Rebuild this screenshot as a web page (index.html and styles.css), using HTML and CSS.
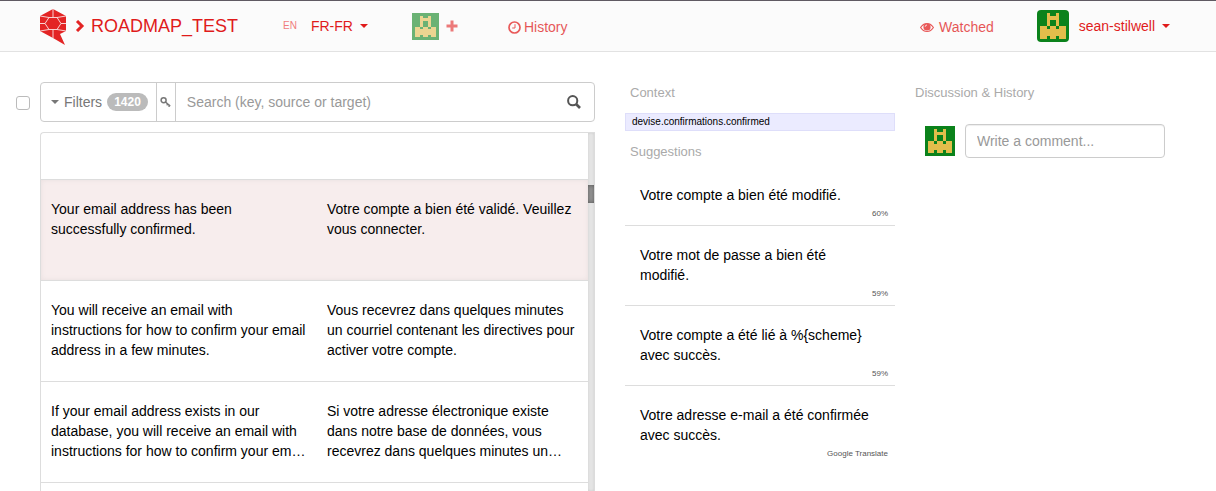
FILE: index.html
```html
<!DOCTYPE html>
<html lang="en">
<head>
<meta charset="utf-8">
<title>ROADMAP_TEST</title>
<link rel="stylesheet" href="styles.css">
</head>
<body>
<svg class="defs" aria-hidden="true">
  <symbol id="avatar" viewBox="0 0 10 10">
    <rect width="10" height="10" fill="#0b821b"/>
    <path fill="#e2bd4b" d="M3 1h1v1h2V1h1v4h2v4H7V8H6v1H4V8H3v1H1V5h2V1zM4 3v2h2V3zM3 5v1h1V5zM6 5v1h1V5z" fill-rule="evenodd" shape-rendering="crispEdges"/>
  </symbol>
</svg>
<header class="nav">
  <a class="logo" href="#" aria-label="Home">
    <svg width="26" height="36" viewBox="0 0 26 36">
      <path fill="#e32424" d="M13 0 26 7v15l-6 3 5 11-12-7L0 22V7z"/>
      <path fill="none" stroke="#fbe4e4" stroke-width=".9" d="M9 8.500h8l4 6-4 6H9l-4-6zM13 0v8.500M0 7l9 1.500M26 7l-9 1.500M0 14.500h5M21 14.500h5M9 20.500 0 22M17 20.500l9 1.500M13 20.500V29"/>
    </svg>
  </a>
  <svg class="chevron" width="10" height="12" viewBox="0 0 10 12"><path d="M2 1l5 5-5 5" fill="none" stroke="#e32424" stroke-width="3"/></svg>
  <a class="project" href="#">ROADMAP_TEST</a>
  <span class="source">EN</span>
  <button class="menu lang" type="button">FR-FR <i class="caret"></i></button>
  <a class="team" href="#" aria-label="Add member">
    <svg width="27" height="27"><use href="#avatar"/></svg>
    <svg width="12" height="12" viewBox="0 0 12 12"><path d="M6 2v8M2 6h8" stroke="#e32424" stroke-width="3" stroke-linecap="square" fill="none"/></svg>
  </a>
  <a class="link history" href="#"><svg width="13" height="13" viewBox="0 0 13 13" fill="none" stroke="#e32424"><circle cx="6.500" cy="6.500" r="5.500" stroke-width="1.700"/><path d="M7 3.200V7H4.200"/></svg>History</a>
  <a class="link watched" href="#"><svg width="14" height="11" viewBox="0 0 14 11"><path d="M.6 5.500C3.800.2 10.200.2 13.400 5.500 10.200 10.800 3.800 10.800.6 5.500z" fill="none" stroke="#e32424" stroke-width="1.200"/><circle cx="7" cy="5" r="3.600" fill="#e32424"/><path d="M5.200 4.800A1.800 1.800 0 0 1 7 3" fill="none" stroke="#fbfbfb" stroke-width=".8"/></svg>Watched</a>
  <button class="menu user" type="button"><svg class="face" width="32" height="32"><use href="#avatar"/></svg>sean-stilwell <i class="caret"></i></button>
</header>
<main class="board">
  <input class="pick" type="checkbox" aria-label="Select all">
  <section class="strings">
    <form class="search">
      <button class="filters" type="button"><i class="caret"></i>Filters<span class="badge">1420</span></button>
      <button class="key" type="button" aria-label="Key filter"><svg width="11" height="10" viewBox="0 0 11 10" fill="none" stroke="#777"><circle cx="3.600" cy="3.300" r="2.500" stroke-width="1.500"/><path d="M5.200 4.800l5 4.300M6.600 8.200l1.500-1.700M8.600 9.700l1.500-1.700" stroke-width="1.400"/></svg></button>
      <input class="query" type="text" aria-label="Search" placeholder="Search (key, source or target)">
      <button class="go" type="submit" aria-label="Search"><svg width="14" height="14" viewBox="0 0 14 14" fill="none" stroke="#555"><circle cx="5.700" cy="5.700" r="4.600" stroke-width="2"/><path d="M9 9l4 4" stroke-width="2.600"/></svg></button>
    </form>
    <div class="list">
      <div class="rows">
        <div class="row short"></div>
        <div class="row active"><p>Your email address has been successfully confirmed.</p><p>Votre compte a bien été validé. Veuillez vous connecter.</p></div>
        <div class="row"><p>You will receive an email with instructions for how to confirm your email address in a few minutes.</p><p>Vous recevrez dans quelques minutes un courriel contenant les directives pour activer votre compte.</p></div>
        <div class="row"><p>If your email address exists in our database, you will receive an email with instructions for how to confirm your em…</p><p>Si votre adresse électronique existe dans notre base de données, vous recevrez dans quelques minutes un…</p></div>
      </div>
      <div class="track"><div class="thumb"></div></div>
    </div>
  </section>
  <section class="context">
    <h2>Context</h2>
    <p class="path">devise.confirmations.confirmed</p>
    <h2>Suggestions</h2>
    <ul class="suggestions">
      <li>Votre compte a bien été modifié.<small>60%</small></li>
      <li>Votre mot de passe a bien été modifié.<small>59%</small></li>
      <li>Votre compte a été lié à %{scheme} avec succès.<small>59%</small></li>
      <li>Votre adresse e-mail a été confirmée avec succès.<small>Google Translate</small></li>
    </ul>
  </section>
  <section class="talk">
    <h2>Discussion &amp; History</h2>
    <div class="comment">
      <svg width="30" height="30" aria-hidden="true"><use href="#avatar"/></svg>
      <input type="text" aria-label="Comment" placeholder="Write a comment...">
    </div>
  </section>
</main>
</body>
</html>
```
FILE: styles.css
```css
* { box-sizing: border-box; }
html { height: 100%; }
body {
  margin: 0;
  min-height: 100%;
  display: flex;
  flex-direction: column;
  font: 14px/20px "Liberation Sans", Arial, sans-serif;
  color: #000;
  background: #fff;
}
p, h2, ul { margin: 0; padding: 0; }
button, input { font: inherit; }
button { padding: 0; border: 0; background: none; cursor: pointer; }
svg { display: block; flex: none; }
.defs { position: absolute; width: 0; height: 0; }
.caret {
  display: inline-block;
  border: 4px solid transparent;
  border-top-color: currentColor;
  border-bottom: 0;
}

.nav {
  flex: none;
  display: flex;
  align-items: center;
  height: 52px;
  padding: 0 46px 0 40px;
  background: #fbfbfb;
  border-top: 1px solid #5f5a62;
  border-bottom: 1px solid #e2e2e2;
}
.nav a, .menu { color: #e01b1b; text-decoration: none; }
.nav .logo { padding-top: 2px; }
.chevron { margin: 0 6px 0 9px; }
.project { font-size: 18px; }
.source { margin-left: 45px; font-size: 10px; color: #f07c7c; }
.menu { display: flex; align-items: center; gap: 7px; }
.lang { margin-left: 14px; }
.nav .team { display: flex; align-items: center; gap: 7px; margin-left: 44px; opacity: .6; }
.nav .link { display: flex; align-items: center; gap: 3px; padding-top: 2px; opacity: .75; }
.nav .history { margin-left: 50px; }
.nav .watched { margin-left: auto; gap: 5px; }
.user { margin-left: 43px; }
.face { border-radius: 4px; margin-right: 3px; }

.board {
  flex: 1;
  display: grid;
  grid-template-columns: 25px minmax(0, 585fr) minmax(0, 290fr) minmax(0, 301fr);
  padding: 30px 0 0 15px;
}
.pick {
  appearance: none;
  width: 14px;
  height: 14px;
  margin: 14px 0 0 1px;
  border: 1px solid #bbb;
  border-radius: 3px;
  background: #fff;
}
.strings { display: flex; flex-direction: column; padding-right: 30px; }
.context { padding-right: 20px; }
.search {
  flex: none;
  display: flex;
  height: 40px;
  border: 1px solid #ccc;
  border-radius: 4px;
}
.filters {
  display: flex;
  align-items: center;
  gap: 5px;
  padding: 0 8px 0 10px;
  color: #777;
}
.badge {
  padding: 0 7px;
  border-radius: 10px;
  background: #bbb;
  color: #fff;
  font-size: 12px;
  line-height: 18px;
  font-weight: bold;
}
.key {
  display: flex;
  align-items: center;
  justify-content: center;
  width: 20px;
  border: 1px solid #ccc;
  border-width: 0 1px;
}
.query { flex: 1; min-width: 0; border: 0; padding: 0 11px; background: none; }
input::placeholder { color: #999; opacity: 1; }
.go { padding: 0 13px; }
.list {
  flex: 1;
  display: flex;
  margin-top: 10px;
  overflow: hidden;
  border: 1px solid #ddd;
  border-width: 1px 0 0 1px;
  border-radius: 4px 0 0 0;
}
.rows { flex: 1; }
.row {
  display: grid;
  grid-template-columns: 276fr 271fr;
  min-height: 101px;
  padding: 19px 0;
  border-bottom: 1px solid #ddd;
}
.row p { padding: 0 10px; }
.row.short { min-height: 47px; }
.active { background: #f7eded; box-shadow: inset 0 0 5px #e8dfdf; }
.track {
  width: 7px;
  padding-top: 52px;
  background: #e6e6e6;
  border-right: 1px solid #dcdcdc;
  box-shadow: inset 0 0 3px #ccc;
}
.thumb { height: 18px; background: #999; box-shadow: inset 0 0 4px #555; }

h2 { padding-top: 1px; font-size: 13px; line-height: 20px; font-weight: normal; color: #aaa; }
.context h2 { padding-left: 5px; }
.path {
  margin: 10px 0;
  padding: 0 6px;
  font-size: 10px;
  line-height: 16px;
  background: #ebebff;
  border: 1px solid #dedefa;
}
.suggestions { list-style: none; margin-top: 4px; }
.suggestions li { padding: 19px 17px 4px 15px; border-bottom: 1px solid #ddd; }
.suggestions li:last-child { border: 0; }
.suggestions small {
  display: block;
  margin: 1px -10px 0 0;
  text-align: right;
  font-size: 8px;
  line-height: 15px;
  color: #555;
}
.comment { display: flex; align-items: center; gap: 10px; padding: 21px 51px 0 10px; }
.comment input {
  flex: 1;
  min-width: 0;
  height: 34px;
  padding: 0 11px;
  border: 1px solid #ccc;
  border-radius: 4px;
  box-shadow: inset 0 1px 1px #eee;
}
```
